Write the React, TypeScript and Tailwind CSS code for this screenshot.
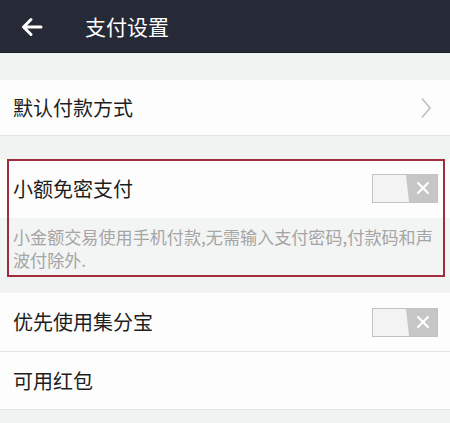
import React from "react";

const font = { fontFamily: '"Noto Sans CJK SC", "Noto Sans", sans-serif' };

function Toggle() {
  return (
    <svg width="66" height="29" viewBox="0 0 66 29" className="block">
      <rect x="0.5" y="0.5" width="65" height="28" fill="#c6c6c6" stroke="#c2c2c2" />
      <polygon points="1,1 34,1 37,28 1,28" fill="#f3f3f3" />
      <path d="M46 9 L56 19 M56 9 L46 19" stroke="#ffffff" strokeWidth="2.2" strokeLinecap="round" />
    </svg>
  );
}

export default function App() {
  return (
    <div className="w-[450px] h-[423px] overflow-hidden bg-[#f1f3f3]" style={font}>
      {/* header */}
      <div className="h-[53px] bg-[#262a36] border-b border-[#1c1f28] flex items-center">
        <svg width="22" height="20" viewBox="0 0 22 20" className="ml-[21px] mt-[1px]">
          <path d="M20 10 H3 M10 2.5 L2.5 10 L10 17.5" stroke="#ffffff" strokeWidth="3" fill="none" strokeLinecap="round" strokeLinejoin="round" />
        </svg>
        <span className="ml-[42px] text-[21px] leading-none text-white">支付设置</span>
      </div>

      <div className="h-[27px]" />

      <div className="h-[56px] flex flex-col">
        <div className="flex-1 flex items-center justify-between bg-[#fdfdfd] pl-[13px] pr-[18px] border-b border-[#e2e4e4]">
          <span className="text-[20px] leading-none text-[#1e1e1e]">默认付款方式</span>
          <svg width="12" height="22" viewBox="0 0 12 22">
            <path d="M2 1.5 L10 11 L2 20.5" stroke="#c4c4c4" strokeWidth="1.8" fill="none" />
          </svg>
        </div>
      </div>

      <div className="h-[23px]" />

      <div className="relative">
        <div className="h-[59px] flex items-center justify-between bg-[#fdfdfd] pl-[13px] pr-[12px]">
          <span className="text-[20px] leading-none text-[#1e1e1e]">小额免密支付</span>
          <Toggle />
        </div>
        <div className="h-[59px] bg-[#f3f4f4] pl-[13px] pt-[7px] text-[17.1px] leading-[23px] text-[#a5a5a5] whitespace-nowrap">
          小金额交易使用手机付款,无需输入支付密码,付款码和声
          <br />
          波付除外.
        </div>
        <div className="absolute left-[7px] right-[5px] top-0 bottom-0 border-2 border-[#a02c3c] pointer-events-none" />
      </div>

      <div className="h-[16px]" />

      <div className="h-[59px] flex items-center justify-between bg-[#fdfdfd] pl-[13px] pr-[12px] border-b border-[#e2e4e4]">
        <span className="text-[20px] leading-none text-[#1e1e1e]">优先使用集分宝</span>
        <Toggle />
      </div>
      <div className="h-[58px] flex items-center bg-[#fdfdfd] pl-[13px] border-b border-[#e2e4e4]">
        <span className="text-[20px] leading-none text-[#1e1e1e]">可用红包</span>
      </div>
    </div>
  );
}
